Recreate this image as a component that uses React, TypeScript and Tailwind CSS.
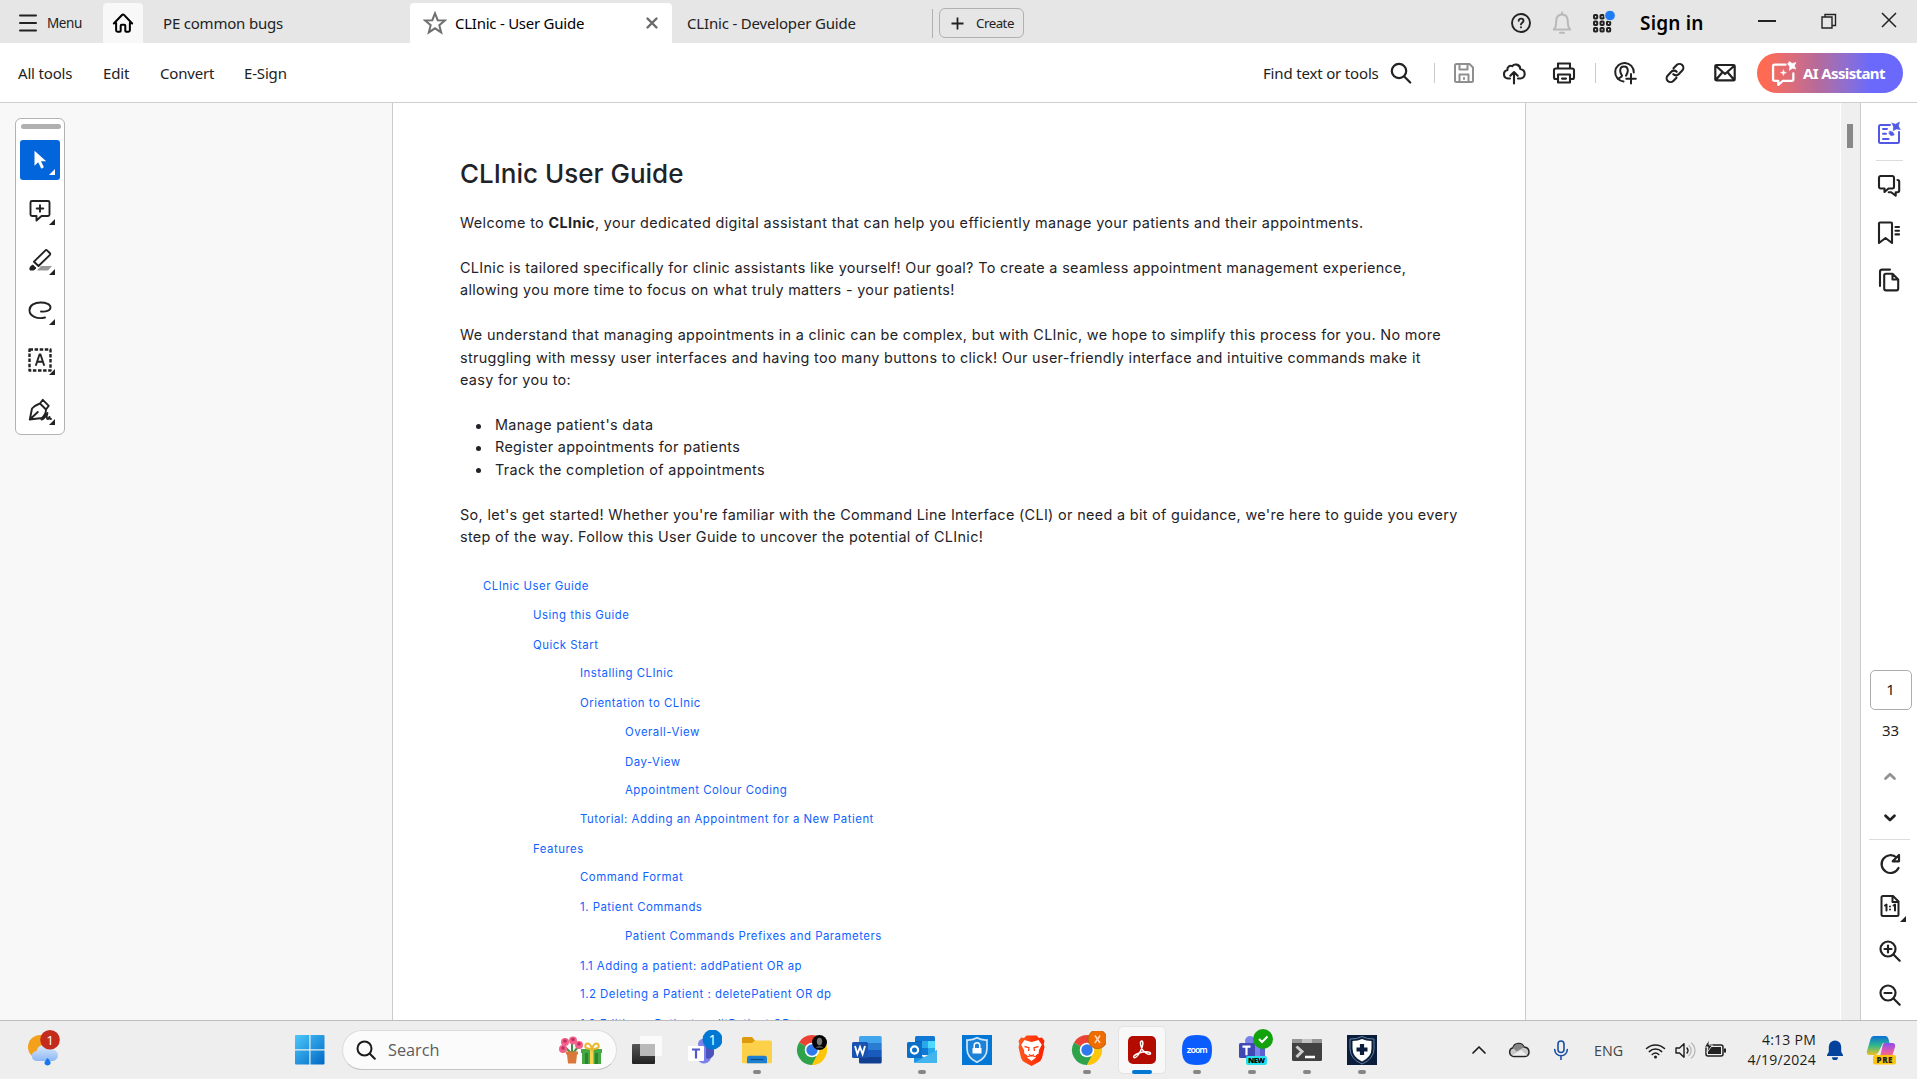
import type { ReactNode } from 'react';

type IconProps = { className?: string; children: ReactNode; box?: string; width?: number };

function Icon({ className = 'size-6', children, box = '0 0 24 24', width = 2 }: IconProps) {
  return (
    <svg className={`block shrink-0 ${className}`} viewBox={box} fill="none" stroke="currentColor" strokeWidth={width} strokeLinecap="round" strokeLinejoin="round">
      {children}
    </svg>
  );
}

const Corner = ({ className = 'text-[#222]' }: { className?: string }) => (
  <svg className={`absolute size-[6px] ${className}`} viewBox="0 0 6 6">
    <path d="M6 0v6H0z" fill="currentColor" />
  </svg>
);

/* ---------- window title bar ---------- */

function TitleBar() {
  return (
    <header className="flex h-[43px] shrink-0 bg-[#e6e6e6] text-[#222]">
      <button className="flex w-[103px] items-center pl-[18px] pt-[3px]">
        <Icon className="size-5" box="0 0 20 20" width={2}>
          <path d="M2 2.5h16M2 10h16M2 17.5h16" />
        </Icon>
        <span className="ml-[9px] pt-px text-[13.5px] tracking-[-0.4px]">Menu</span>
      </button>
      <div className="mt-[3px] flex w-10 items-center justify-center rounded-t-[4px] bg-[#f8f8f8] text-black">
        <Icon className="mt-[-1px] size-[22px]" width={2.2}>
          <path d="M4.5 12v8a1.5 1.5 0 0 0 1.5 1.5h2.5a1 1 0 0 0 1-1V15a1 1 0 0 1 1-1h3a1 1 0 0 1 1 1v5.500a1 1 0 0 0 1 1H18a1.500 1.500 0 0 0 1.500-1.500v-8M2 12.500 10.900 3.200a1.500 1.500 0 0 1 2.200 0L22 12.500" />
        </Icon>
      </div>
      <div className="flex w-[267px] items-center pl-5 pt-[3px] text-[15px] tracking-[-0.2px]">PE common bugs</div>
      <div className="mt-[3px] flex w-[262px] items-center rounded-t-[4px] bg-white pl-[13px] pr-[12px] text-[15px] tracking-[-0.25px] text-black">
        <Icon className="size-[24px] text-[#707070]" width={2}>
          <path strokeLinejoin="miter" d="m12 2.300 2.700 6.900 7.200.3-5.600 4.700 1.900 7.200L12 17.300l-6.200 4.100 1.900-7.200L2.100 9.500l7.200-.3z" />
        </Icon>
        <span className="ml-2 flex-1">CLInic - User Guide</span>
        <Icon className="size-[16px] text-[#6a6a6a]" box="0 0 16 16" width={2.4}>
          <path d="m3.500 3.500 9 9M12.500 3.500l-9 9" />
        </Icon>
      </div>
      <div className="flex w-[260px] items-center pl-[15px] pt-[3px] text-[15px] tracking-[-0.18px]">CLInic - Developer Guide</div>
      <div className="mt-[9px] h-[29px] w-px bg-[#b0b0b0]" />
      <button className="ml-[6px] mt-[8px] flex h-[30px] w-[85px] items-center rounded-[6px] border border-[#b1b1b1] pl-[11px]">
        <Icon className="size-[13px]" box="0 0 13 13" width={1.800}>
          <path strokeLinecap="butt" d="M6.500.5v12M.5 6.500h12" />
        </Icon>
        <span className="ml-[12px] pt-px text-[13.300px] tracking-[-0.500px]">Create</span>
      </button>
      <div className="ml-auto flex items-center pr-[20px]">
        <Icon className="size-[22px] mt-[3px]" box="0 0 22 22" width={1.900}>
          <circle cx="11" cy="11" r="9" />
          <path d="M8.700 8.800c0-3 4.800-2.900 4.800 0 0 1.900-2.500 1.900-2.500 3.600M11 15.300v.1" />
        </Icon>
        <Icon className="ml-[18px] mt-[3px] size-[24px] text-[#b9b9b9]" width={2}>
          <path d="M3.800 18.500c2.200-2 2.400-4.500 2.400-8C6.200 5.500 9 3.500 12 3.500s5.800 2 5.800 7c0 3.500.2 6 2.400 8zM10 21.800h4M12 1.500v1.500" />
        </Icon>
        <svg className="ml-[17px] size-[26px]" viewBox="0 0 26 26" fill="none" stroke="#222" strokeWidth="2">
          {[0, 1, 2].map((r) => [0, 1, 2].map((c) => <rect key={`${r}${c}`} x={3 + c * 6.500} y={6 + r * 6.500} width="3.200" height="3.600" rx=".8" />))}
          <circle cx="19" cy="6.500" r="5.300" fill="#1d7cf2" stroke="#e6e6e6" strokeWidth="1" />
        </svg>
        <span className="ml-[23px] mt-[4px] w-[66px] whitespace-nowrap text-[19px] font-semibold tracking-[0.200px] text-black">Sign in</span>
        <Icon className="ml-[51px] mt-[-2px] size-[20px]" box="0 0 20 20" width={2}>
          <path strokeLinecap="butt" d="M1 10h18" />
        </Icon>
        <Icon className="ml-[43px] mt-[-2px] size-[18px]" box="0 0 18 18" width={1.400}>
          <path d="M2 5h10v11H2zM5 5V2.500h10.500v11H12" strokeLinejoin="miter" />
        </Icon>
        <Icon className="ml-[43px] mt-[-3px] size-[16px]" box="0 0 16 16" width={1.500}>
          <path strokeLinecap="butt" d="m1 1 14 14M15 1 1 15" />
        </Icon>
      </div>
    </header>
  );
}

/* ---------- toolbar ---------- */

function Toolbar() {
  return (
    <nav className="flex h-[60px] shrink-0 items-center border-b border-[#cfcfcf] bg-white pt-px text-[15px] tracking-[-0.170px] text-[#222]">
      <span className="w-[85px] pl-[18px]">All tools</span>
      <span className="w-[57px] pl-[18px]">Edit</span>
      <span className="w-[84px] pl-[18px]">Convert</span>
      <span className="pl-[18px]">E-Sign</span>
      <div className="ml-auto flex items-center pr-[14px]">
        <span className="w-[116px] whitespace-nowrap">Find text or tools</span>
        <Icon className="ml-[11px] size-[22px]" box="0 0 22 22" width={2.200}>
          <circle cx="9" cy="9" r="7.200" />
          <path d="m14.200 14.500 6 6" />
        </Icon>
        <div className="ml-[22px] h-5 w-px bg-[#cacaca]" />
        <Icon className="ml-[18px] size-[22px] text-[#8f8f8f]" box="0 0 22 22" width={2}>
          <path d="M2 3.500A1.500 1.500 0 0 1 3.500 2h13L20 5.500v13a1.500 1.500 0 0 1-1.500 1.500h-15A1.500 1.500 0 0 1 2 18.500zM6.500 2.500v5h8v-5M6.500 19.500v-7h9v7M11 16v1" />
        </Icon>
        <Icon className="ml-[27px] size-[24px]" width={2.100}>
          <path d="M8 17.500H6a4.300 4.300 0 0 1-.6-8.500C5 5.500 8.200 4 10.300 5.200 12 2.500 18 2.800 18.300 8c6 .8 5.700 9.500 0 9.500H16M12 22.500V11.500M8.300 14.700 12 11l3.700 3.700" />
        </Icon>
        <Icon className="ml-[26px] size-[24px]" width={2.100}>
          <path d="M6 7.500V2.500h12v5M5.500 18H3.800A1.800 1.800 0 0 1 2 16.200V9.300A1.800 1.800 0 0 1 3.800 7.500h16.400A1.800 1.800 0 0 1 22 9.300v6.900a1.800 1.800 0 0 1-1.800 1.800h-1.700M6 13.500h12v8H6zM10 17.600h4" />
        </Icon>
        <div className="ml-[19px] h-5 w-px bg-[#cacaca]" />
        <Icon className="ml-[17px] size-[24px]" width={2}>
          <path d="M10.500 20.500a9.300 9.300 0 1 1 10.300-9M5 18c.6-1.500 4-1.500 4-3.200 0-1-1.800-2-1.800-5 0-2.500 1.400-4.300 3.800-4.300s3.800 1.800 3.800 4.300c0 3-1.800 4-1.800 5M18 13v9.500M13.300 17.700h9.500" />
        </Icon>
        <Icon className="ml-[27px] size-[22px]" box="0 0 22 22" width={2.100}>
          <path d="m9.500 6.300 3.200-3.200a3.800 3.800 0 0 1 5.500 5.500l-3.500 3.600a3.800 3.800 0 0 1-5.400 0M12.500 15.700l-3.200 3.200a3.800 3.800 0 0 1-5.500-5.500l3.500-3.600a3.800 3.800 0 0 1 5.400 0" />
        </Icon>
        <Icon className="ml-[27px] size-[24px]" width={2.200}>
          <path d="M3.500 4h17A1.200 1.200 0 0 1 21.700 5.200v13a1.200 1.200 0 0 1-1.200 1.200h-17a1.200 1.200 0 0 1-1.200-1.200v-13A1.200 1.200 0 0 1 3.500 4zM3 5l9 8 9-8M3 18.800l6.200-7.300M21 18.800l-6.200-7.300" />
        </Icon>
        <button className="ml-[20px] flex h-10 w-[146px] items-center rounded-full bg-gradient-to-r from-[#ff6a52] from-[6%] via-[#b56a9b] via-[42%] to-[#6a69fc] to-[78%] pl-[14px] text-white">
          <Icon className="size-[27px]" box="0 0 26 26" width={2.200}>
            <path d="M14 4.500H3.500A1.500 1.500 0 0 0 2 6v12.500A1.500 1.500 0 0 0 3.500 20H7v4l4.500-4H20a1.500 1.500 0 0 0 1.500-1.500V13" />
            <path d="m18 1.500 2.300 1.800 3.700-1-1.500 3.400 1.500 3-3.400-.7-3 2 .5-3.600L16 3.800z" fill="currentColor" strokeWidth=".5" />
            <path d="m12 9.300.8 2.100 2.200.8-2.200.8-.8 2.200-.8-2.200-2.200-.8 2.200-.8z" fill="currentColor" strokeWidth=".3" />
          </Icon>
          <span className="ml-[5px] whitespace-nowrap pt-px text-[15px] font-bold tracking-[-0.620px]">AI Assistant</span>
        </button>
      </div>
    </nav>
  );
}

/* ---------- floating quick tools ---------- */

const quickTools: ReactNode[] = [
  <path key="c" d="M2.500 4.500A1.500 1.500 0 0 1 4 3h16a1.500 1.500 0 0 1 1.500 1.500v12A1.500 1.500 0 0 1 20 18h-6.500L8.500 22.500V18H4a1.500 1.500 0 0 1-1.500-1.500zM12 7.300v6.500M8.700 10.500h6.600" />,
  <g key="h">
    <path d="M13 18h11l-4 4.500H9z" fill="#999" stroke="none" />
    <path d="M17.200 2.600a1.500 1.500 0 0 1 2.100 0l2.400 2.400a1.500 1.500 0 0 1 0 2.100L10.500 18 6 13.700z" />
    <path d="M5 17.500 8 20l-2.300 2H2c-.5-2.500.5-4.500 3-4.500z" fill="currentColor" strokeWidth="1" />
  </g>,
  <path key="l" d="M17 19.500C9 21.500 1.500 18 1.500 12.200 1.500 7 7 4.500 12.500 4.500c6 0 10 2 10 4.800 0 3.700-5 4.700-9.500 4.200" />,
  <g key="t">
    <rect x="1.500" y="1.500" width="21" height="21" strokeDasharray="3.500 1.600" strokeLinecap="butt" strokeWidth="2.400" />
    <path d="m8 17 3.500-10.500h1L16 17M9.200 13.700h5.600" />
  </g>,
  <path key="s" d="M1.800 21.500 4 10.500C6.500 7.500 9.500 6.500 12 5.500l6 6c0 3.500-1.500 6-4 8.500zM1.800 21.500l8-7.500M12 5.500l2.800-3.700 6 6L18 11.500M13.500 21.500c3.500-.5 4.500-4 6-6.500-1 3-.5 5.500 0 6 1 .5 1.500-1.500 2-2 0 1.500.5 2 1.500 2" />,
];

function QuickTools() {
  return (
    <aside className="ml-[15px] mt-[15px] flex h-[317px] w-[50px] flex-col items-center rounded-[6px] border border-[#b3b3b3] bg-white">
      <div className="ml-px mt-[5px] h-[5px] w-10 rounded-full bg-[#b0b0b0]" />
      <div className="relative mt-[11px] flex size-10 items-center justify-center rounded-[3px] bg-[#0265dc]">
        <svg className="ml-px mt-[-2px] h-[19px] w-[13px]" viewBox="0 0 13 19">
          <path d="M.5.800v15l3.700-3.600 3 6.300q2.700-.3 2.500-1.700L7 11.300h5.200z" fill="#fff" />
        </svg>
        <Corner className="bottom-[5px] right-[5px] text-white" />
      </div>
      {quickTools.map((shape, i) => (
        <div key={i} className="relative mt-[10px] flex size-10 items-center justify-center text-[#222]">
          <Icon className="mr-px mt-[-1px] size-[24px]" width={1.900}>{shape}</Icon>
          <Corner className="bottom-[5px] right-[5px] text-[#222]" />
        </div>
      ))}
    </aside>
  );
}

/* ---------- document page ---------- */

const toc: [number, string, string][] = [
  [0, 'CLInic User Guide', 'h-[29px]'],
  [1, 'Using this Guide', 'h-[30px]'],
  [1, 'Quick Start', 'h-[28px]'],
  [2, 'Installing CLInic', 'h-[30px]'],
  [2, 'Orientation to CLInic', 'h-[29px]'],
  [3, 'Overall-View', 'h-[30px]'],
  [3, 'Day-View', 'h-[28px]'],
  [3, 'Appointment Colour Coding', 'h-[29px]'],
  [2, 'Tutorial: Adding an Appointment for a New Patient', 'h-[30px]'],
  [1, 'Features', 'h-[28px]'],
  [2, 'Command Format', 'h-[30px]'],
  [2, '1. Patient Commands', 'h-[29px]'],
  [3, 'Patient Commands Prefixes and Parameters', 'h-[30px]'],
  [2, '1.1 Adding a patient: addPatient OR ap', 'h-[28px]'],
  [2, '1.2 Deleting a Patient : deletePatient OR dp', 'h-[30px]'],
  [2, '1.3 Editing a Patient : editPatient OR ep', 'h-[29px]'],
];
const indent = ['pl-[23px]', 'pl-[73px]', 'pl-[120px]', 'pl-[165px]'];

function Lines({ lines, className = '' }: { lines: ReactNode[]; className?: string }) {
  return (
    <p className={`mb-[22.500px] ${className}`}>
      {lines.map((l, i) => (
        <span key={i} className="block">{l}</span>
      ))}
    </p>
  );
}

function Page() {
  return (
    <article className="h-full w-[1134px] shrink-0 overflow-hidden whitespace-nowrap border-x border-[#cbcbcb] bg-white pl-[67px] font-[Inter,sans-serif] text-[14.400px] leading-[22.400px] tracking-[0.332px] text-[#1f2328]">
      <h1 className="mt-[53px] text-[26px] font-medium leading-9 tracking-[0px]">CLInic User Guide</h1>
      <div className="mt-5">
        <Lines className="tracking-[0.370px]" lines={[<>Welcome to <b className="font-bold">CLInic</b>, your dedicated digital assistant that can help you efficiently manage your patients and their appointments.</>]} />
        <Lines lines={['CLInic is tailored specifically for clinic assistants like yourself! Our goal? To create a seamless appointment management experience,', 'allowing you more time to focus on what truly matters - your patients!']} />
        <Lines lines={['We understand that managing appointments in a clinic can be complex, but with CLInic, we hope to simplify this process for you. No more', 'struggling with messy user interfaces and having too many buttons to click! Our user-friendly interface and intuitive commands make it', 'easy for you to:']} />
        <ul className="mb-[22.500px]">
          {["Manage patient's data", 'Register appointments for patients', 'Track the completion of appointments'].map((t) => (
            <li key={t} className="flex items-center">
              <span className="ml-[16px] mr-[14px] mt-[2px] size-[5px] rounded-full bg-[#1f2328]" />
              {t}
            </li>
          ))}
        </ul>
        <Lines lines={["So, let's get started! Whether you're familiar with the Command Line Interface (CLI) or need a bit of guidance, we're here to guide you every", 'step of the way. Follow this User Guide to uncover the potential of CLInic!']} />
      </div>
      <ul className="mt-[30px] text-[11.400px] leading-4 tracking-[0.505px] text-[#0f62fe]">
        {toc.map(([level, text, h]) => (
          <li key={text} className={`${h} ${indent[level]}`}>{text}</li>
        ))}
      </ul>
    </article>
  );
}

/* ---------- right rail ---------- */

function RightRail() {
  return (
    <aside className="flex w-[57px] shrink-0 flex-col items-center border-l border-[#cbcbcb] bg-white pl-px text-[#222]">
      <Icon className="mr-px mt-[18px] size-6 text-[#5258e4]" width={2}>
        <path d="M13 4H3.500A1.500 1.500 0 0 0 2 5.500v15A1.500 1.500 0 0 0 3.500 22h17a1.500 1.500 0 0 0 1.500-1.500V11M6 8h4M6 12.700h3M6 18h5.500" />
        <path d="m15 2 3.500 1.200L22.500 1 21.500 5l1.800 3.700-3.800-.7-3.300 1.700.2-4zM13 10l3 1.300 1.300 2.700-3.300.800-2-2.300z" fill="currentColor" strokeWidth=".5" />
      </Icon>
      <div className="mt-[15px] h-px w-[27px] bg-[#dcdcdc]" />
      <Icon className="mr-px mt-[13px] size-6" width={2.100}>
        <path d="M2 3.700A1.700 1.700 0 0 1 3.700 2h11.600A1.700 1.700 0 0 1 17 3.700v9.100a1.700 1.700 0 0 1-1.700 1.700h-3.800L7.500 18v-3.500H3.700A1.700 1.700 0 0 1 2 12.800zM20.500 6c1 0 1.700.7 1.700 1.700v8.800c0 1-.7 1.700-1.700 1.700h-1.800v3.600l-4.500-3.600h-2.500" />
      </Icon>
      <Icon className="mr-px mt-[23px] size-6" width={2.100}>
        <path d="M2 2.500A1 1 0 0 1 3 1.500h11a1 1 0 0 1 1 1V22l-6.500-5L2 22zM18.500 6H22M18.500 9.700H22M18.500 13.400H22" />
      </Icon>
      <Icon className="mr-px mt-[23px] size-6" width={2.100}>
        <path d="M15.500 5.800H9A1.800 1.800 0 0 0 7.200 7.600v13A1.800 1.800 0 0 0 9 22.400h10.400a1.800 1.800 0 0 0 1.800-1.800V11.500zM15.500 6v5.500H21M3 18V3.800A2.200 2.200 0 0 1 5.200 1.600H13" />
      </Icon>
      <div className="ml-[2px] mt-[378px] flex h-10 w-[42px] items-center justify-center rounded-[5px] border border-[#adadad] pb-[2px] text-[15px]">1</div>
      <span className="ml-[2px] mt-[9px] text-[15px] leading-[22px]">33</span>
      <Icon className="mt-[28px] size-[14px] text-[#929292]" box="0 0 14 14" width={2.700}><path d="m2.500 9.500 4.500-4.300 4.500 4.300" /></Icon>
      <Icon className="mt-[28px] size-[14px]" box="0 0 14 14" width={2.700}><path d="m2.500 4.700 4.500 4.300 4.500-4.300" /></Icon>
      <div className="mt-[14px] h-px w-[41px] bg-[#dcdcdc]" />
      <Icon className="mt-[12px] size-6" width={2.200}>
        <path d="M18.500 5.500A8.900 8.900 0 1 0 20.500 16M21 3v6.300h-6.300z" />
      </Icon>
      <div className="relative mt-[18px]">
        <Icon className="size-6" width={2}>
          <path d="M5 2h10l5.500 5.500v13A1.500 1.500 0 0 1 19 22H5a1.500 1.500 0 0 1-1.500-1.500v-17A1.500 1.500 0 0 1 5 2zM14.500 2.500V8H20M7 11.500l1.500-1v6M15.500 11.500l1.500-1v6M12 12.500v.1M12 15.500v.1" />
        </Icon>
        <Corner className="-bottom-[4px] -right-[4px] text-[#222]" />
      </div>
      <Icon className="ml-px mt-[21px] size-6" width={2.200}>
        <circle cx="10" cy="10" r="7.500" /><path d="m15.700 15.700 6 6M10 6.500v7M6.500 10h7" />
      </Icon>
      <Icon className="ml-px mt-[20px] size-6" width={2.200}>
        <circle cx="10" cy="10" r="7.500" /><path d="m15.700 15.700 6 6M6.500 10h7" />
      </Icon>
    </aside>
  );
}

/* ---------- taskbar ---------- */

const Chrome = ({ badge }: { badge: ReactNode }) => (
  <svg className="size-[38px]" viewBox="-4 -4 38 38">
    <path d="M15 15 2 7.500A15 15 0 0 1 28 7.500z" fill="#ea4335" />
    <path d="M15 15 28 7.500A15 15 0 0 1 15 30z" fill="#fdc60a" />
    <path d="M15 15 15 30A15 15 0 0 1 2 7.500z" fill="#2fa24c" />
    <path d="M15 8h13.200L30 15l-8.500 3.500z" fill="#fdc60a" />
    <path d="m21 18.500-6 11.500-6-5 0-6z" fill="#2fa24c" />
    <path d="m21.200 18.500-6.200 11.500a15 15 0 0 0 9-3l2-7z" fill="#fdc60a" />
    <circle cx="15" cy="15" r="7.300" fill="#fff" /><circle cx="15" cy="15" r="5.700" fill="#2f79ed" />
    {badge}
  </svg>
);

type App = { icon: ReactNode; run?: boolean; active?: boolean };

const apps: App[] = [
  { icon: (
    <svg className="size-[30px]" viewBox="0 0 30 30">
      <defs><linearGradient id="tv" x2="0" y2="1"><stop stopColor="#555" /><stop offset="1" stopColor="#222" /></linearGradient></defs>
      <rect x="0" y="9" width="23" height="20" rx="1" fill="url(#tv)" /><rect x="8" y="1" width="22" height="20" rx="1" fill="#fff" opacity=".7" /><path d="M8 9h15v12H8z" fill="#b5b5b5" opacity=".8" />
    </svg>
  ) },
  { icon: (
    <svg className="size-[40px]" viewBox="0 0 40 40">
      <circle cx="21" cy="14" r="5" fill="#7b83eb" /><path d="M12 16h17v11a7 7 0 0 1-13 3z" fill="#7b83eb" /><path d="M24 17h8v7a5.500 5.500 0 0 1-8 4z" fill="#4b53bc" />
      <rect x="6" y="16" width="16" height="15" rx="1" fill="#fff" /><path d="M10 19.500h8M14 19.500v9" stroke="#5059c9" strokeWidth="2.200" />
      <circle cx="30.500" cy="9.500" r="10" fill="#0078d4" />
      <text x="30.500" y="14.500" textAnchor="middle" fontSize="14" fill="#fff" fontFamily="Open Sans">1</text>
    </svg>
  ) },
  { run: true, icon: (
    <svg className="size-[30px]" viewBox="0 0 30 30">
      <path d="M0 3.500A1.500 1.500 0 0 1 1.500 2H10l3 3.500V12H0z" fill="#dd9a0c" />
      <path d="M0 8h10l3-2.500h15.500A1.500 1.500 0 0 1 30 7v20a1.200 1.200 0 0 1-1.200 1.200H1.200A1.200 1.200 0 0 1 0 27z" fill="#fdd04a" />
      <path d="M5 28.200V23a2.200 2.200 0 0 1 2.200-2.200h15.600A2.200 2.200 0 0 1 25 23v5.200z" fill="#1d7fd1" /><path d="M8.500 24.500h13" stroke="#0b4e8c" strokeWidth="1.200" />
    </svg>
  ) },
  { icon: <Chrome badge={<><circle cx="22.500" cy="7.500" r="7.500" fill="#050505" /><ellipse cx="22.500" cy="6.500" rx="2.700" ry="3.800" fill="#777" /><path d="M18.500 13q4-5 8 0z" fill="#444" /></>} /> },
  { icon: (
    <svg className="size-[30px]" viewBox="0 0 30 30">
      <path d="M7 2.500A1.500 1.500 0 0 1 8.500 1h19.700A1.500 1.500 0 0 1 29.700 2.500V8H7z" fill="#41a5ee" /><path d="M7 8h22.700v7H7z" fill="#2b7cd3" /><path d="M7 15h22.700v7H7z" fill="#185abd" /><path d="M7 22h22.700v5a1.500 1.500 0 0 1-1.500 1.500H8.500A1.500 1.500 0 0 1 7 27z" fill="#103f91" />
      <rect y="7" width="16" height="16" rx="1.500" fill="#1a52b0" /><path d="m3 11 2.400 8L8 12l2.600 7L13 11" fill="none" stroke="#fff" strokeWidth="1.900" />
    </svg>
  ) },
  { run: true, icon: (
    <svg className="size-[30px]" viewBox="0 0 30 30">
      <path d="M8 2.500A1.500 1.500 0 0 1 9.500 1h17A1.500 1.500 0 0 1 28 2.500V18H8z" fill="#0f78d4" /><path d="M8 6h7v7H8z" fill="#0b5fae" /><path d="M21 6h7v7h-7z" fill="#50d9ff" /><path d="M15 6h6v7h-6z" fill="#28a8ea" /><path d="M15 13h6v7h-6z" fill="#0f78d4" /><path d="M21 13h7v7h-7z" fill="#28a8ea" />
      <path d="M7 16.500 18 23l12-8v11.500a1.500 1.500 0 0 1-1.500 1.500h-20A1.500 1.500 0 0 1 7 26.500z" fill="#1e92df" /><path d="m7 28 23-13v12.500q0 .5-1 .5z" fill="#43b5ee" />
      <rect y="7" width="15" height="16" rx="1.500" fill="#0a6fc9" /><circle cx="7.500" cy="15" r="3.600" fill="none" stroke="#fff" strokeWidth="2.200" />
    </svg>
  ) },
  { icon: (
    <svg className="size-[30px]" viewBox="0 0 30 30">
      <path d="M0 0h30v30H0z" fill="#0277d6" /><path d="M15 2.800q4 2.500 10 2.200v8.500Q25 23 15 27.200 5 23 5 13.500V5q6 .3 10-2.200z" fill="#1b82d8" stroke="#cfe6f8" strokeWidth="1.700" />
      <path d="M10.500 13h9v5.500h-9z" fill="#fff" /><path d="M12.200 13v-2.500a2.800 2.800 0 0 1 5.600 0V13" fill="none" stroke="#fff" strokeWidth="1.500" />
    </svg>
  ) },
  { icon: (
    <svg className="h-[31px] w-[27px]" viewBox="0 0 27 31">
      <defs><linearGradient id="bv"><stop stopColor="#ff5a1f" /><stop offset="1" stopColor="#ff1f00" /></linearGradient></defs>
      <path d="m8.500.5h10L21 3l3-.5L26.500 6l-.8 3 .8 3-2.500 11q-1 3-4 4.500L13.500 31 7 27.500Q4 26 3 23L.500 12l.8-3L.500 6 3 2.500 6 3z" fill="url(#bv)" />
      <path d="m13.500 7 3-.7 4-1.300 3.300 4.800-2.800 5.200-.3 3.500-3 1.800.300 2.200L13.500 26 9 22.500l.3-2.200-3-1.800L6 15 3.200 9.800 6.500 5l4 1.300z" fill="#fff" />
      <path d="m6.500 11.500 4.500 1.200-.5 3.300M20.500 11.500 16 12.700l.5 3.300M11 19.500l2.500 1.500 2.500-1.500M9 22l4.500-1.500L18 22" fill="none" stroke="#ff4013" strokeWidth="1.300" />
    </svg>
  ) },
  { run: true, icon: <Chrome badge={<><circle cx="25.500" cy="4.200" r="9.500" fill="#ef6c00" stroke="#a8590f" strokeWidth=".7" className="translate-y-0" /><path d="m22.900.5 5.200 7.500M28.100.5 22.900 8" stroke="#ffd9bd" strokeWidth="1.500" /></>} /> },
  { run: true, active: true, icon: (
    <svg className="size-[28px]" viewBox="0 0 28 28">
      <rect width="28" height="28" rx="5" fill="#b30b00" />
      <path d="M13.600 5c2.300 0 1.200 5.500-.8 9.500s-5 7.800-6.800 7c-2-1.500 4-4.700 9-5.400 4-.6 7.800-.3 7.500 1.500-.4 2-5.300-.3-7.500-3.200-2.400-3.200-3.500-9.400-1.400-9.400z" fill="none" stroke="#fff" strokeWidth="1.500" />
    </svg>
  ) },
  { run: true, icon: (
    <svg className="size-[30px]" viewBox="0 0 30 30">
      <path d="M15 0C26 0 30 4 30 15s-4 15-15 15S0 26 0 15 4 0 15 0z" fill="#0b5cff" />
      <text x="15" y="17.700" textAnchor="middle" fontSize="9" fontWeight="600" fill="#fff" fontFamily="Inter" textLength="21">zoom</text>
    </svg>
  ) },
  { run: true, icon: (
    <svg className="size-[44px]" viewBox="0 0 44 44">
      <circle cx="20" cy="13" r="5" fill="#7b83eb" /><path d="M20 15h15v11a5 5 0 0 1-15 3z" fill="#5b5fd0" /><path d="M22 15h8v16h-8z" fill="#7b83eb" />
      <rect x="9" y="15" width="16" height="15" rx="1.500" fill="#4048b5" /><path d="M12.500 18.700h8M16.500 18.700v8.500" stroke="#fff" strokeWidth="2.200" />
      <rect x="16" y="28" width="21" height="9" rx="2" fill="#27e0ee" />
      <text x="26.500" y="35.300" textAnchor="middle" fontSize="7.500" fontWeight="800" fill="#000" fontFamily="Open Sans" textLength="17">NEW</text>
      <circle cx="33" cy="11" r="10" fill="#13a10e" /><path d="m29 11 3 3 5.500-5.500" fill="none" stroke="#fff" strokeWidth="2" />
    </svg>
  ) },
  { run: true, icon: (
    <svg className="size-[30px]" viewBox="0 0 30 30">
      <rect y="4" width="30" height="22" rx="1.500" fill="#414141" /><path d="M0 5.500A1.500 1.500 0 0 1 1.500 4h27A1.500 1.500 0 0 1 30 5.500V8H0z" fill="#969696" /><path d="M10 4h10v4H10z" fill="#c2c2c2" />
      <path d="m4.500 11.500 5.500 5-5.500 5.500" fill="none" stroke="#ccc" strokeWidth="3" /><path d="M13 22h10" stroke="#fff" strokeWidth="2.500" />
    </svg>
  ) },
  { run: true, icon: (
    <svg className="size-[30px]" viewBox="0 0 30 30">
      <path d="M0 0h30v30H0z" fill="#0a1e3c" /><path d="M15 1.500q5 2.800 12 2.500v9.500Q27 24 15 29 3 24 3 13.500V4q7 .3 12-2.500z" fill="#0a1e3c" stroke="#6d8ba9" strokeWidth=".9" />
      <path d="M15 4q4 2 9.500 2v7.500q0 8.500-9.500 13-9.500-4.500-9.500-13V6Q11 6 15 4z" fill="#fff" /><path d="M15 9v11M9.500 14.500h11" stroke="#0a1e3c" strokeWidth="4.200" />
    </svg>
  ) },
];

function TaskButton({ icon, run, active }: App) {
  return (
    <div className="relative flex h-full w-[55px] items-center justify-center">
      <div className={active ? 'flex size-[48px] items-center justify-center rounded-[5px] border border-[#e3e3e3] bg-[#f8f8f8]' : 'contents'}>{icon}</div>
      {run && <span className={`absolute bottom-[5px] h-[4px] rounded-full ${active ? 'w-5 bg-[#0078d4]' : 'w-2 bg-[#868686]'}`} />}
    </div>
  );
}

function Taskbar() {
  return (
    <footer className="flex h-[59px] shrink-0 items-center border-t border-[#bdbdbd] bg-[#eeeeee] font-['Open_Sans',sans-serif] text-[#1c1c1c]">
      <svg className="ml-[26px] h-[40px] w-[36px]" viewBox="0 0 36 40">
        <defs><linearGradient id="cl" x2="0" y2="1"><stop stopColor="#dbe9fb" /><stop offset="1" stopColor="#8db8f5" /></linearGradient></defs>
        <circle cx="14" cy="17" r="12" fill="#f3a11d" />
        <path d="M11 31a5 5 0 0 1-.5-10 8 8 0 0 1 15-1.500A5.800 5.800 0 0 1 27 31z" fill="url(#cl)" />
        <path d="M21.500 28q4 4 3 5.500a3.200 3.200 0 0 1-6 0Q18 32 21.500 28z" fill="#1679f2" />
        <circle cx="24" cy="9.800" r="9.800" fill="#c42b1c" />
        <text x="24" y="14.600" textAnchor="middle" fontSize="13.500" fill="#fff">1</text>
      </svg>
      <svg className="ml-[233px] size-[30px]" viewBox="0 0 30 30">
        <defs><linearGradient id="win" x2="1" y2="1"><stop stopColor="#4cc8fb" /><stop offset="1" stopColor="#0067c4" /></linearGradient></defs>
        <path d="M0 1a1 1 0 0 1 1-1h13.300v14.300H0zM15.500 0H28.500a1 1 0 0 1 1 1v13.300h-14zM0 15.500h14.300v14H1a1 1 0 0 1-1-1zM15.500 15.500h14v13a1 1 0 0 1-1 1h-13z" fill="url(#win)" />
      </svg>
      <div className="ml-[17px] flex h-[40px] w-[275px] items-center rounded-full border border-[#dcdcdc] border-b-[#c4c4c4] bg-[#fbfbfb] pl-[13px]">
        <Icon className="size-[20px] text-[#1c1c1c]" box="0 0 20 20" width={2}>
          <circle cx="8.500" cy="8.500" r="7" /><path d="m13.800 13.800 5 5" />
        </Icon>
        <span className="ml-[12px] pt-px text-[16.300px] text-[#5c5c5c]">Search</span>
        <svg className="ml-auto mr-[13px] h-[28px] w-[44px]" viewBox="0 0 44 28">
          <path d="M13 8v9M6 11l6 6M19 11l-5 6" stroke="#3f9142" strokeWidth="2" />
          {[[6, 6], [14, 4.500], [20, 9], [4, 13]].map(([x, y]) => (
            <g key={`${x}-${y}`}><circle cx={x} cy={y} r="4" fill="#f2618c" /><circle cx={x} cy={y - 1} r="1.800" fill="#c22e5c" /></g>
          ))}
          <path d="M7 15.500h12v3h-1l-1 9H9l-1-9H7z" fill="#d9783a" />
          <path d="M22 13h21v4H22zM23 17h19v11H23z" fill="#45a843" /><path d="M26 17h3v11h-3zM36 17h3v11h-3z" fill="#2c8432" />
          <path d="M31 13h3.500v15H31z" fill="#f8d34d" /><path d="M33 13q-9 0-6-5 4-2 6 5 2-7 6-5 3 5-6 5z" fill="none" stroke="#e8b82e" strokeWidth="2" />
        </svg>
      </div>
      <div className="ml-[2px] flex h-full">
        {apps.map((a, i) => <TaskButton key={i} {...a} />)}
      </div>
      <div className="ml-auto flex items-center pr-[21px]">
        <Icon className="size-[16px]" box="0 0 16 16" width={1.700}><path d="m2 11 6-6 6 6" /></Icon>
        <svg className="ml-[21px] h-[16px] w-[23px]" viewBox="0 0 23 16">
          <path d="M5.500 14.500a4.500 4.500 0 0 1-.5-8.800C6.500.500 14 .200 16 5c6.500.500 6.500 9.500 1 9.500z" fill="#c9c9c9" stroke="#222" strokeWidth="1.500" />
          <path d="M5 5.800C7 .500 14 .500 16 5.200L8.500 9.500z" fill="#848484" /><path d="m4 13.500 9-5.500 6.500 5.500z" fill="#eee" />
        </svg>
        <Icon className="ml-[20px] size-[20px] text-[#1a4fa3]" box="0 0 20 20" width={1.600}>
          <rect x="7" y="1" width="6" height="11.500" rx="3" /><path d="M3.700 9.500a6.300 6.300 0 0 0 12.600 0M10 16v3.500" />
        </Icon>
        <span className="ml-[23px] w-[30px] pt-px text-[14.300px] text-[#444]">ENG</span>
        <Icon className="ml-[21px] size-[21px]" box="0 0 21 21" width={1.500}>
          <path d="M1.500 8.500a13 13 0 0 1 18 0M4.300 11.600a9 9 0 0 1 12.400 0M7.200 14.500a5 5 0 0 1 6.600 0" /><circle cx="10.500" cy="17" r="1.500" fill="currentColor" stroke="none" />
        </Icon>
        <Icon className="ml-[9px] size-[21px]" box="0 0 21 21" width={1.400}>
          <path d="M1 8h3.500L9 3.800v13.400L4.500 13H1zM12 8a4 4 0 0 1 0 5" /><path d="M14 5.500a7 7 0 0 1 0 10M16.500 3a10 10 0 0 1 0 15" stroke="#bbb" />
        </Icon>
        <svg className="ml-[8px] h-[20px] w-[22px]" viewBox="0 0 22 20">
          <rect x="2" y="5" width="17" height="11" rx="2" fill="none" stroke="#222" strokeWidth="1.500" /><path d="M4 7h13v7H4zM20 8.500h2v4h-2z" fill="#222" />
          <path d="M5 0 .500 7H4L3 12.500 8.500 5H5z" fill="#222" stroke="#eee" strokeWidth=".9" />
        </svg>
        <div className="ml-[17px] w-[73px] whitespace-nowrap text-right text-[14px] leading-5 tracking-[0.250px]">
          <div>4:13 PM</div>
          <div>4/19/2024</div>
        </div>
        <svg className="ml-[10px] h-[20px] w-[18px]" viewBox="0 0 18 20">
          <path d="M9 .500a6.200 6.200 0 0 1 6.200 6.200v5L17 15v1H1v-1l1.800-3.300v-5A6.200 6.200 0 0 1 9 .500zM6 17.300h6a3 3 0 0 1-6 0z" fill="#04439b" />
        </svg>
        <svg className="ml-[22px] size-[30px]" viewBox="0 0 30 30">
          <defs>
            <linearGradient id="cpa" x2="0" y2="1"><stop stopColor="#0a6fd8" /><stop offset=".5" stopColor="#2fb88c" /><stop offset="1" stopColor="#f0c020" /></linearGradient>
            <linearGradient id="cpb" x2="0" y2="1"><stop stopColor="#8a4df0" /><stop offset=".6" stopColor="#ee5fa0" /><stop offset="1" stopColor="#f7883c" /></linearGradient>
          </defs>
          <path d="M8 1h11q2.500 0 3.500 3l1 4H17l-5 10q-1 2-3.500 2H3.500Q0 20 1 16L4.500 4Q5.500 1 8 1z" fill="url(#cpa)" />
          <path d="M18.500 8H26q4 0 3 4l-2.500 8q-1.500 4-5 4H10q3.500 0 4.500-4l2-9q.500-3 2-3z" fill="url(#cpb)" />
          <rect x="7" y="20" width="23" height="9.500" rx="2" fill="#fdc50c" />
          <text x="18.500" y="27.700" textAnchor="middle" fontSize="8" fontWeight="800" fill="#222" textLength="16">PRE</text>
        </svg>
      </div>
    </footer>
  );
}

export default function App() {
  return (
    <div className="flex h-[1079px] w-[1917px] flex-col overflow-hidden bg-white font-['Noto_Sans',sans-serif]">
      <TitleBar />
      <Toolbar />
      <main className="flex min-h-0 flex-1 bg-[#f8f8f8]">
        <div className="w-[392px] shrink-0">
          <QuickTools />
        </div>
        <Page />
        <div className="flex-1" />
        <div className="w-5 shrink-0 border-l border-white bg-[#efefef] pl-[6px] pt-[21px]">
          <div className="h-6 w-[6px] bg-[#888]" />
        </div>
        <RightRail />
      </main>
      <Taskbar />
    </div>
  );
}
